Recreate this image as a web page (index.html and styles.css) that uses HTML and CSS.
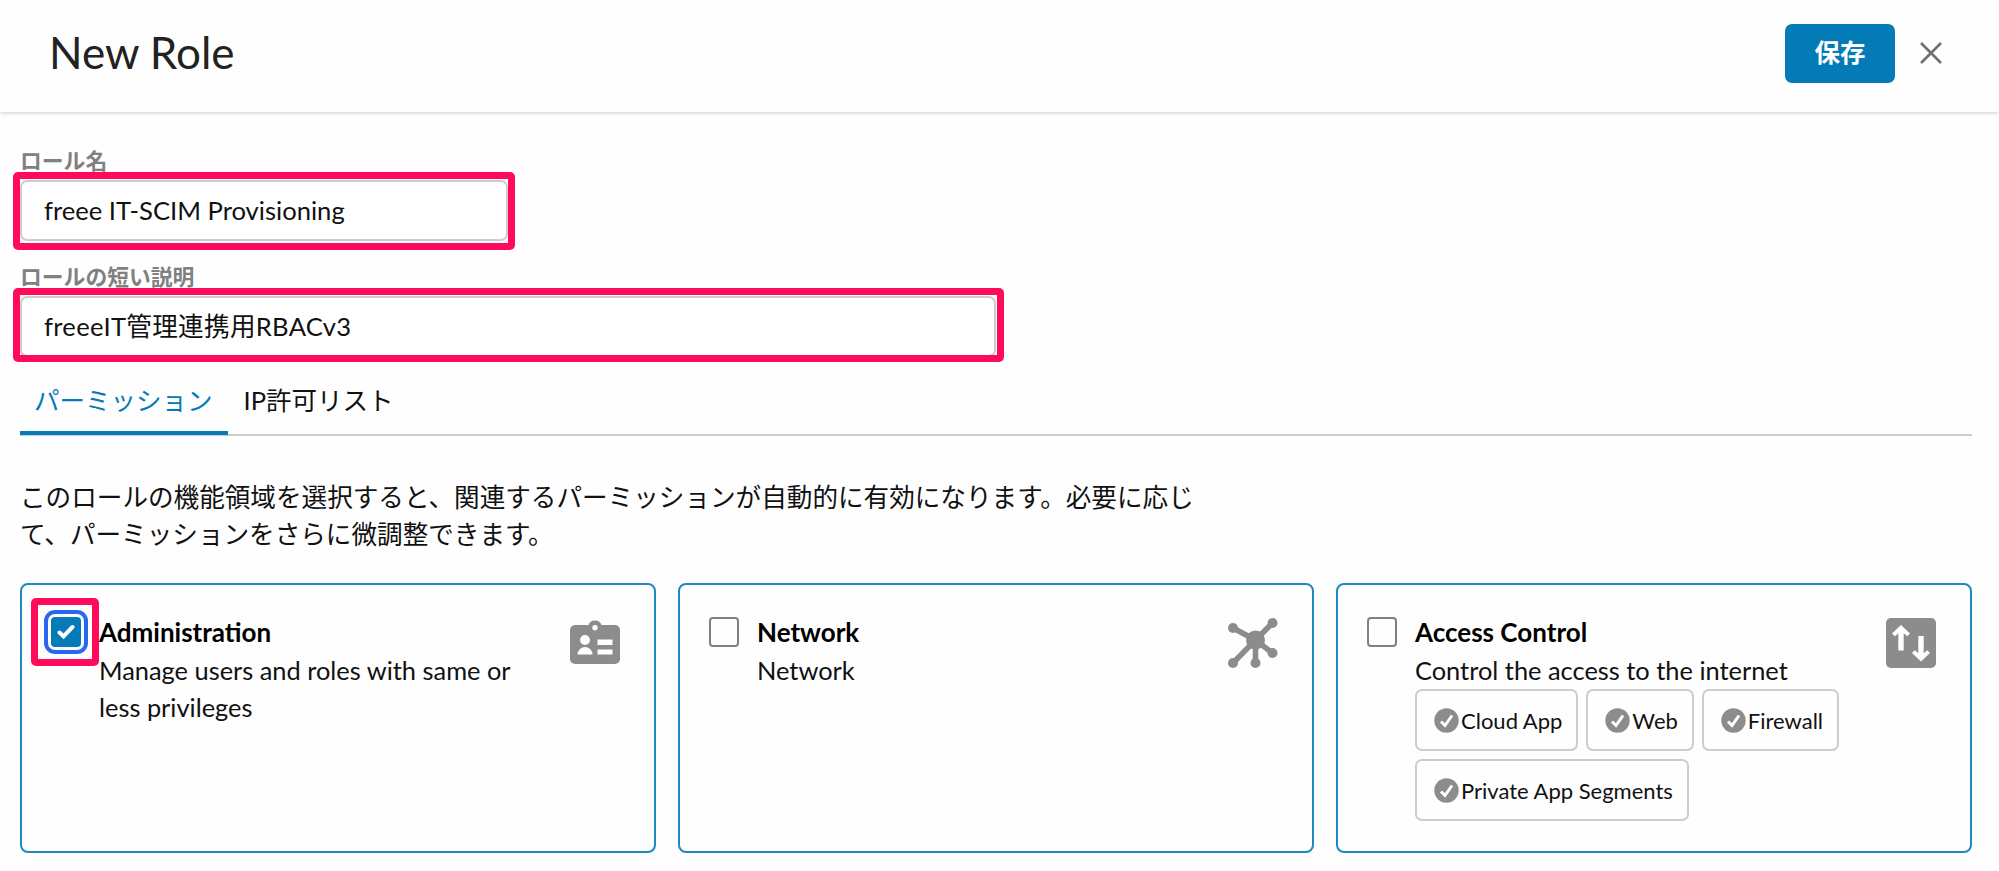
FILE: index.html
```html
<!DOCTYPE html>
<html lang="ja">
<head>
    <meta charset="UTF-8">
    <meta name="viewport" content="width=device-width, initial-scale=1.0">
    <title>New Role</title>
    <link rel="stylesheet" href="styles.css">
</head>
<body>
    <header class="page-header">
        <h1>New Role</h1>
        <button class="save-button">保存</button>
        <button class="close-button" aria-label="閉じる">
            <svg width="22" height="22" viewBox="0 0 22 22"><path d="M1 1l20 20M21 1L1 21"/></svg>
        </button>
    </header>
    <main>
        <div class="field field-name">
            <label for="roleName">ロール名</label>
            <div class="input-wrap">
                <input type="text" id="roleName" value="freee IT-SCIM Provisioning">
                <span class="highlight"></span>
            </div>
        </div>
        <div class="field field-description">
            <label for="roleDescription">ロールの短い説明</label>
            <div class="input-wrap">
                <input type="text" id="roleDescription" value="freeeIT管理連携用RBACv3">
                <span class="highlight"></span>
            </div>
        </div>

        <nav class="tabs">
            <a href="#" class="tab active">パーミッション</a>
            <a href="#" class="tab">IP許可リスト</a>
        </nav>

        <p class="intro">このロールの機能領域を選択すると、関連するパーミッションが自動的に有効になります。必要に応じて、パーミッションをさらに微調整できます。</p>

        <div class="cards">
            <section class="card">
                <div class="checkbox checked">
                    <svg width="18" height="16" viewBox="0 0 18 16"><path d="M2.500 8.500l4 4L15.500 3"/></svg>
                    <span class="highlight"></span>
                </div>
                <div class="card-body">
                    <h2>Administration</h2>
                    <p>Manage users and roles with same or less privileges</p>
                </div>
                <svg class="card-icon" width="50" height="50" viewBox="0 0 50 50">
                    <path fill-rule="evenodd" d="M5 7H18.500A7 7 0 0 1 31.500 7H45a5 5 0 0 1 5 5V41a5 5 0 0 1-5 5H5a5 5 0 0 1-5-5V12a5 5 0 0 1 5-5zM25 7a2.700 2.700 0 1 0 0 5.400a2.700 2.700 0 1 0 0-5.400zM15 17a5 5 0 1 0 0 10a5 5 0 1 0 0-10zM7.500 36.500H22.500a7.500 7.500 0 0 0-15 0zM27.500 21.500V27H42.500V21.500zM27.500 31.500V36.500H42.500V31.500z"/>
                </svg>
            </section>

            <section class="card">
                <div class="checkbox"></div>
                <div class="card-body">
                    <h2>Network</h2>
                    <p>Network</p>
                </div>
                <svg class="card-icon" width="50" height="50" viewBox="0 0 50 50">
                    <path class="link" d="M27.500 22L44.500 5M27.500 22L5 10M27.500 22L5 45M27.500 22V45M27.500 22L44.500 35"/>
                    <circle cx="27.500" cy="22" r="9.500"/>
                    <circle cx="44.500" cy="5" r="5"/>
                    <circle cx="5" cy="10" r="5"/>
                    <circle cx="5" cy="45" r="5"/>
                    <circle cx="27.500" cy="45" r="5"/>
                    <circle cx="44.500" cy="35" r="5"/>
                </svg>
            </section>

            <section class="card">
                <div class="checkbox"></div>
                <div class="card-body">
                    <h2>Access Control</h2>
                    <p>Control the access to the internet</p>
                    <div class="chips">
                        <span class="chip"><svg width="25" height="25" viewBox="0 0 25 25"><circle cx="12.500" cy="12.500" r="12.200"/><path d="M7 13.500l4 4 7-10"/></svg>Cloud App</span>
                        <span class="chip"><svg width="25" height="25" viewBox="0 0 25 25"><circle cx="12.500" cy="12.500" r="12.200"/><path d="M7 13.500l4 4 7-10"/></svg>Web</span>
                        <span class="chip"><svg width="25" height="25" viewBox="0 0 25 25"><circle cx="12.500" cy="12.500" r="12.200"/><path d="M7 13.500l4 4 7-10"/></svg>Firewall</span>
                        <span class="chip"><svg width="25" height="25" viewBox="0 0 25 25"><circle cx="12.500" cy="12.500" r="12.200"/><path d="M7 13.500l4 4 7-10"/></svg>Private App Segments</span>
                    </div>
                </div>
                <svg class="card-icon" width="50" height="50" viewBox="0 0 50 50">
                    <rect width="50" height="50" rx="5"/>
                    <path class="arrow" d="M15 7l9 8.500-2.800 2.800-3.500-3V32.500h-5.400V15.300l-3.500 3L6 15.500zM35 43.500l-9-8.500 2.800-2.800 3.500 3V18h5.400V35.200l3.500-3L44 35z"/>
                </svg>
            </section>
        </div>
    </main>
</body>
</html>
```

FILE: styles.css
```css
* {
    box-sizing: border-box;
}
body {
    font-family: Lato, "Noto Sans CJK JP", sans-serif;
    font-size: 25.5px;
    line-height: 37px;
    margin: 0;
    background-color: #fefefe;
    color: #111111;
}
.page-header {
    display: flex;
    align-items: center;
    height: 112px;
    padding: 0 57px 6px 49px;
    box-shadow: 0 1px 4px rgba(0, 0, 0, 0.2);
}
h1 {
    flex: 1;
    margin: 0;
    padding-bottom: 2px;
    font-size: 44px;
    font-weight: 400;
    color: #222222;
}
.save-button {
    width: 110px;
    height: 59px;
    padding: 0 0 5px;
    background-color: #047ab7;
    color: #ffffff;
    border: none;
    border-radius: 7px;
    font-family: inherit;
    font-size: 25.5px;
    font-weight: 700;
}
.close-button {
    display: flex;
    margin-left: 25px;
    padding: 0;
    background: none;
    border: none;
}
.close-button svg {
    fill: none;
    stroke: #6f6f6f;
    stroke-width: 2.5;
}
main {
    padding: 38px 27px 0 20px;
}
.field label {
    display: block;
    height: 30px;
    line-height: 22px;
    font-size: 21.8px;
    font-weight: 700;
    color: #808080;
}
.input-wrap {
    position: relative;
    height: 61px;
}
.field-name {
    margin-bottom: 25px;
}
.field-name .input-wrap {
    width: 488px;
}
.field-description {
    margin-bottom: 23px;
}
.field-description .input-wrap {
    width: 976px;
}
input[type="text"] {
    width: 100%;
    height: 61px;
    padding: 0 22px 2px;
    border: 2px solid #cccccc;
    border-radius: 7px;
    background-color: #ffffff;
    color: #111111;
    font-family: inherit;
    font-size: 25.6px;
}
.field-description input[type="text"] {
    padding-bottom: 5px;
    letter-spacing: 0.3px;
}
/* Red frames around the parts to fill in */
.highlight {
    position: absolute;
    top: -8px;
    right: -7px;
    bottom: -9px;
    left: -7px;
    border: 7px solid #ff0b5a;
    border-radius: 5px;
    pointer-events: none;
}
.field-description .highlight {
    right: -8px;
    bottom: -5px;
}
.tabs {
    display: flex;
    height: 56px;
    border-bottom: 2px solid #cccccc;
}
.tab {
    height: 55px;
    padding: 2px 16px 0;
    color: #111111;
    text-decoration: none;
}
.tab.active {
    padding: 2px 15px 0 14px;
    color: #047ab7;
    border-bottom: 4px solid #047ab7;
}
.intro {
    width: 1190px;
    margin: 43px 0 30px;
    font-size: 25.6px;
}
.cards {
    display: grid;
    grid-template-columns: repeat(3, 1fr);
    gap: 22px;
}
.card {
    display: flex;
    align-items: flex-start;
    height: 270px;
    padding: 29px 34px 0 29px;
    border: 2px solid #2089c2;
    border-radius: 8px;
}
.checkbox {
    position: relative;
    display: flex;
    align-items: center;
    justify-content: center;
    width: 30px;
    height: 30px;
    margin-top: 3px;
    border: 2px solid #808080;
    border-radius: 4px;
}
.checkbox.checked {
    background-color: #047ab7;
    border-color: #047ab7;
    outline: 4px solid #2a66f0;
    outline-offset: 3px;
}
.checkbox svg {
    fill: none;
    stroke: #ffffff;
    stroke-width: 4;
    stroke-linecap: round;
}
.checkbox .highlight {
    top: -21px;
    right: -20px;
    bottom: -21px;
    left: -22px;
}
.card-body {
    flex: 1;
    margin-left: 18px;
}
.card-body h2 {
    margin: 0 0 1px;
    font-size: 26px;
    font-weight: 700;
    color: #000000;
}
.card-body p {
    max-width: 430px;
    margin: 0;
    font-size: 25.4px;
}
.card-icon {
    flex: none;
    margin-top: 4px;
    fill: #8c8c8c;
}
.card-icon .link {
    stroke: #8c8c8c;
    stroke-width: 5.5;
}
.card-icon .arrow {
    fill: #ffffff;
}
.chips {
    display: flex;
    flex-wrap: wrap;
    gap: 8px;
}
.chip {
    display: flex;
    align-items: center;
    height: 62px;
    padding: 0 14px 0 17px;
    border: 2px solid #cccccc;
    border-radius: 7px;
    font-size: 22px;
}
.chip svg {
    margin-right: 2px;
    fill: #8c8c8c;
}
.chip path {
    fill: none;
    stroke: #ffffff;
    stroke-width: 3;
}
```
